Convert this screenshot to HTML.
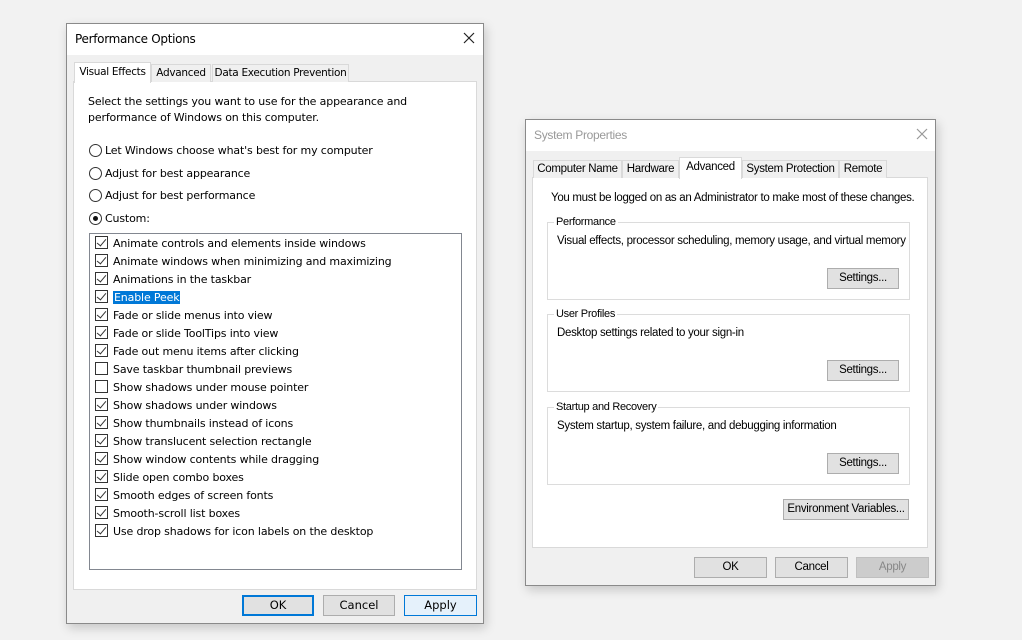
<!DOCTYPE html>
<html><head><meta charset="utf-8"><style>
*{box-sizing:border-box;margin:0;padding:0}
body{width:1022px;height:640px;background:#f2f2f2;position:relative;overflow:hidden;font-family:"DejaVu Sans","Liberation Sans",sans-serif;color:#000}
.a{position:absolute;white-space:nowrap}
.dlg{position:absolute;background:#f0f0f0;border:1px solid #8a8a8a;box-shadow:2px 4px 10px rgba(0,0,0,.18)}
.title{position:absolute;left:0;top:0;right:0;background:#fff}
.btn{position:absolute;background:#e1e1e1;border:1px solid #adadad;text-align:center;font-size:11.5px;line-height:19px;white-space:nowrap}
.panel{position:absolute;background:#fff;border:1px solid #d9d9d9}
.tab{position:absolute;background:#f0f0f0;border:1px solid #d9d9d9;border-bottom:none;text-align:center;line-height:17px;white-space:nowrap;overflow:hidden}
.l{font-size:11px;letter-spacing:-0.15px}
.tl{font-size:10.5px;letter-spacing:-0.3px}
.item{position:absolute;left:5px;height:18px;line-height:18px;white-space:nowrap}
.cb{display:inline-block;width:13px;height:13px;border:1px solid #333;vertical-align:-2px;margin-right:5px;position:relative;background:#fff}
.cb.c::after{content:"";position:absolute;left:3px;top:0px;width:4px;height:8px;border:solid #333;border-width:0 1.5px 1.5px 0;transform:rotate(40deg)}
.rb{position:absolute;width:13px;height:13px;border:1px solid #333;border-radius:50%;background:#fff}
.grp{position:absolute;border:1px solid #dcdcdc}
.gl{position:absolute;background:#fff;padding:0 2px;top:-8px;left:6px;font-size:11px;line-height:14px;white-space:nowrap}
.r{font-family:"Liberation Sans",sans-serif;font-size:11.5px;letter-spacing:-0.3px}
</style></head><body>

<div class="dlg" style="left:66px;top:23px;width:418px;height:601px">
 <div class="title" style="height:31px">
  <div class="a" style="left:8px;top:8px;font-size:12px;letter-spacing:-0.3px">Performance Options</div>
  <svg class="a" style="left:396px;top:8px" width="12" height="12"><path d="M1 1L11 11M11 1L1 11" stroke="#222" stroke-width="1.2"/></svg>
 </div>
 <div class="panel" style="left:6px;top:57px;width:404px;height:509px"></div>
 <div class="tab tl" style="left:84px;top:40px;width:60px;height:18px">Advanced</div>
 <div class="tab tl" style="left:145px;top:40px;width:137px;height:18px">Data Execution Prevention</div>
 <div class="tab tl" style="left:7px;top:38px;width:77px;height:21px;background:#fff;line-height:18px;z-index:2">Visual Effects</div>
 <div class="a l" style="left:21px;top:70px;line-height:16px">Select the settings you want to use for the appearance and<br>performance of Windows on this computer.</div>
 <div class="rb" style="left:22px;top:120px"></div><div class="a l" style="left:38px;top:120px">Let Windows choose what's best for my computer</div>
 <div class="rb" style="left:22px;top:143px"></div><div class="a l" style="left:38px;top:143px">Adjust for best appearance</div>
 <div class="rb" style="left:22px;top:165px"></div><div class="a l" style="left:38px;top:165px">Adjust for best performance</div>
 <div class="rb" style="left:22px;top:188px"><div class="a" style="left:3px;top:3px;width:5px;height:5px;border-radius:50%;background:#111"></div></div><div class="a l" style="left:38px;top:188px">Custom:</div>
 <div class="a l" style="left:22px;top:209px;width:373px;height:337px;border:1px solid #828790;background:#fff">
  <div class="item" style="top:1px"><span class="cb c"></span>Animate controls and elements inside windows</div>
  <div class="item" style="top:19px"><span class="cb c"></span>Animate windows when minimizing and maximizing</div>
  <div class="item" style="top:37px"><span class="cb c"></span>Animations in the taskbar</div>
  <div class="item" style="top:55px"><span class="cb c"></span><span style="background:#0078d7;color:#fff;padding:0 1px">Enable Peek</span></div>
  <div class="item" style="top:73px"><span class="cb c"></span>Fade or slide menus into view</div>
  <div class="item" style="top:91px"><span class="cb c"></span>Fade or slide ToolTips into view</div>
  <div class="item" style="top:109px"><span class="cb c"></span>Fade out menu items after clicking</div>
  <div class="item" style="top:127px"><span class="cb"></span>Save taskbar thumbnail previews</div>
  <div class="item" style="top:145px"><span class="cb"></span>Show shadows under mouse pointer</div>
  <div class="item" style="top:163px"><span class="cb c"></span>Show shadows under windows</div>
  <div class="item" style="top:181px"><span class="cb c"></span>Show thumbnails instead of icons</div>
  <div class="item" style="top:199px"><span class="cb c"></span>Show translucent selection rectangle</div>
  <div class="item" style="top:217px"><span class="cb c"></span>Show window contents while dragging</div>
  <div class="item" style="top:235px"><span class="cb c"></span>Slide open combo boxes</div>
  <div class="item" style="top:253px"><span class="cb c"></span>Smooth edges of screen fonts</div>
  <div class="item" style="top:271px"><span class="cb c"></span>Smooth-scroll list boxes</div>
  <div class="item" style="top:289px"><span class="cb c"></span>Use drop shadows for icon labels on the desktop</div>
 </div>
 <div class="btn" style="left:175px;top:571px;width:72px;height:21px;border:2px solid #0078d7;line-height:17px">OK</div>
 <div class="btn" style="left:256px;top:571px;width:72px;height:21px">Cancel</div>
 <div class="btn" style="left:337px;top:571px;width:73px;height:21px;background:#e5f1fb;border-color:#0078d7">Apply</div>
</div>

<div class="dlg r" style="left:525px;top:119px;width:411px;height:467px">
 <div class="title" style="height:31px">
  <div class="a" style="left:8px;top:8px;font-size:12px;color:#999">System Properties</div>
  <svg class="a" style="left:390px;top:8px" width="12" height="12"><path d="M1 1L11 11M11 1L1 11" stroke="#999" stroke-width="1.2"/></svg>
 </div>
 <div class="panel" style="left:6px;top:57px;width:396px;height:371px"></div>
 <div class="tab" style="left:7px;top:40px;width:89px;height:18px">Computer Name</div>
 <div class="tab" style="left:96px;top:40px;width:57px;height:18px">Hardware</div>
 <div class="tab" style="left:216px;top:40px;width:97px;height:18px">System Protection</div>
 <div class="tab" style="left:313px;top:40px;width:48px;height:18px">Remote</div>
 <div class="tab" style="left:153px;top:37px;width:63px;height:22px;background:#fff;line-height:18px;z-index:2">Advanced</div>
 <div class="a" style="left:25px;top:72px;font-size:11.5px">You must be logged on as an Administrator to make most of these changes.</div>
 <div class="grp" style="left:21px;top:102px;width:363px;height:78px"><div class="gl">Performance</div>
  <div class="a" style="left:9px;top:12px">Visual effects, processor scheduling, memory usage, and virtual memory</div>
  <div class="btn" style="left:279px;top:45px;width:72px;height:21px">Settings...</div></div>
 <div class="grp" style="left:21px;top:194px;width:363px;height:78px"><div class="gl">User Profiles</div>
  <div class="a" style="left:9px;top:12px">Desktop settings related to your sign-in</div>
  <div class="btn" style="left:279px;top:45px;width:72px;height:21px">Settings...</div></div>
 <div class="grp" style="left:21px;top:287px;width:363px;height:78px"><div class="gl">Startup and Recovery</div>
  <div class="a" style="left:9px;top:12px">System startup, system failure, and debugging information</div>
  <div class="btn" style="left:279px;top:45px;width:72px;height:21px">Settings...</div></div>
 <div class="btn" style="left:257px;top:379px;width:126px;height:21px">Environment Variables...</div>
 <div class="btn" style="left:168px;top:437px;width:73px;height:21px">OK</div>
 <div class="btn" style="left:249px;top:437px;width:73px;height:21px">Cancel</div>
 <div class="btn" style="left:330px;top:437px;width:73px;height:21px;background:#ccc;border-color:#bfbfbf;color:#888">Apply</div>
</div>
</body></html>
